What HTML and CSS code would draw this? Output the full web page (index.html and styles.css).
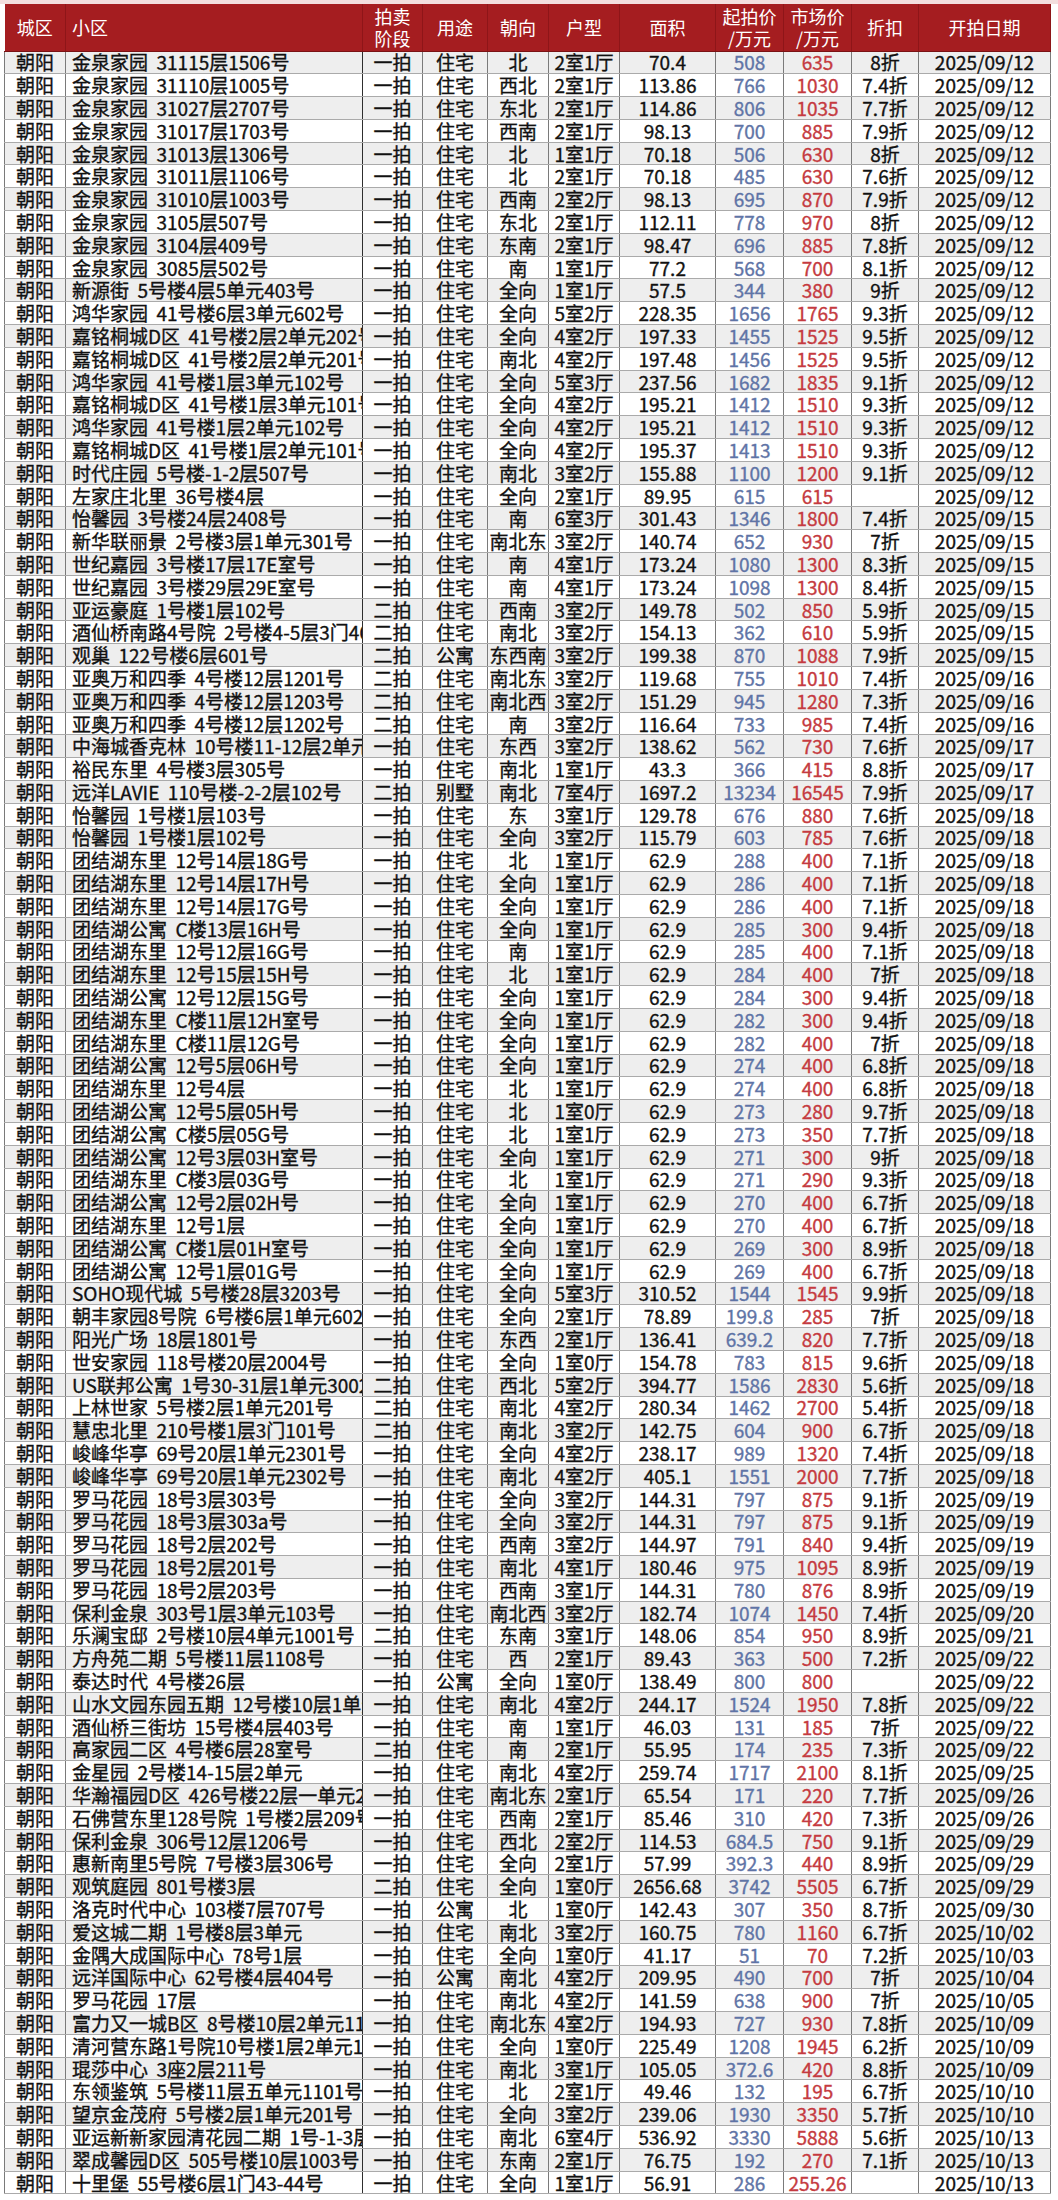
FILE: index.html
```html
<!DOCTYPE html>
<html lang="zh-CN">
<head>
<meta charset="utf-8">
<title>朝阳法拍房</title>
<link rel="stylesheet" href="styles.css">
</head>
<body>
<div class="topbar"></div>
<table class="sheet">
<colgroup>
<col class="c-district"><col class="c-name"><col class="c-stage"><col class="c-use"><col class="c-dir"><col class="c-type"><col class="c-area"><col class="c-start"><col class="c-market"><col class="c-disc"><col class="c-date">
</colgroup>
<thead>
<tr>
<th>城区</th><th class="h-name">小区</th><th>拍卖<br>阶段</th><th>用途</th><th>朝向</th><th>户型</th><th>面积</th><th>起拍价<br>/万元</th><th>市场价<br>/万元</th><th>折扣</th><th>开拍日期</th>
</tr>
</thead>
<tbody>
<tr><td>朝阳</td><td>金泉家园&nbsp;&nbsp;31115层1506号</td><td>一拍</td><td>住宅</td><td>北</td><td>2室1厅</td><td>70.4</td><td>508</td><td>635</td><td>8折</td><td>2025/09/12</td></tr>
<tr><td>朝阳</td><td>金泉家园&nbsp;&nbsp;31110层1005号</td><td>一拍</td><td>住宅</td><td>西北</td><td>2室1厅</td><td>113.86</td><td>766</td><td>1030</td><td>7.4折</td><td>2025/09/12</td></tr>
<tr><td>朝阳</td><td>金泉家园&nbsp;&nbsp;31027层2707号</td><td>一拍</td><td>住宅</td><td>东北</td><td>2室1厅</td><td>114.86</td><td>806</td><td>1035</td><td>7.7折</td><td>2025/09/12</td></tr>
<tr><td>朝阳</td><td>金泉家园&nbsp;&nbsp;31017层1703号</td><td>一拍</td><td>住宅</td><td>西南</td><td>2室1厅</td><td>98.13</td><td>700</td><td>885</td><td>7.9折</td><td>2025/09/12</td></tr>
<tr><td>朝阳</td><td>金泉家园&nbsp;&nbsp;31013层1306号</td><td>一拍</td><td>住宅</td><td>北</td><td>1室1厅</td><td>70.18</td><td>506</td><td>630</td><td>8折</td><td>2025/09/12</td></tr>
<tr><td>朝阳</td><td>金泉家园&nbsp;&nbsp;31011层1106号</td><td>一拍</td><td>住宅</td><td>北</td><td>2室1厅</td><td>70.18</td><td>485</td><td>630</td><td>7.6折</td><td>2025/09/12</td></tr>
<tr><td>朝阳</td><td>金泉家园&nbsp;&nbsp;31010层1003号</td><td>一拍</td><td>住宅</td><td>西南</td><td>2室2厅</td><td>98.13</td><td>695</td><td>870</td><td>7.9折</td><td>2025/09/12</td></tr>
<tr><td>朝阳</td><td>金泉家园&nbsp;&nbsp;3105层507号</td><td>一拍</td><td>住宅</td><td>东北</td><td>2室1厅</td><td>112.11</td><td>778</td><td>970</td><td>8折</td><td>2025/09/12</td></tr>
<tr><td>朝阳</td><td>金泉家园&nbsp;&nbsp;3104层409号</td><td>一拍</td><td>住宅</td><td>东南</td><td>2室1厅</td><td>98.47</td><td>696</td><td>885</td><td>7.8折</td><td>2025/09/12</td></tr>
<tr><td>朝阳</td><td>金泉家园&nbsp;&nbsp;3085层502号</td><td>一拍</td><td>住宅</td><td>南</td><td>1室1厅</td><td>77.2</td><td>568</td><td>700</td><td>8.1折</td><td>2025/09/12</td></tr>
<tr><td>朝阳</td><td>新源街&nbsp;&nbsp;5号楼4层5单元403号</td><td>一拍</td><td>住宅</td><td>全向</td><td>1室1厅</td><td>57.5</td><td>344</td><td>380</td><td>9折</td><td>2025/09/12</td></tr>
<tr><td>朝阳</td><td>鸿华家园&nbsp;&nbsp;41号楼6层3单元602号</td><td>一拍</td><td>住宅</td><td>全向</td><td>5室2厅</td><td>228.35</td><td>1656</td><td>1765</td><td>9.3折</td><td>2025/09/12</td></tr>
<tr><td>朝阳</td><td>嘉铭桐城D区&nbsp;&nbsp;41号楼2层2单元202号</td><td>一拍</td><td>住宅</td><td>全向</td><td>4室2厅</td><td>197.33</td><td>1455</td><td>1525</td><td>9.5折</td><td>2025/09/12</td></tr>
<tr><td>朝阳</td><td>嘉铭桐城D区&nbsp;&nbsp;41号楼2层2单元201号</td><td>一拍</td><td>住宅</td><td>南北</td><td>4室2厅</td><td>197.48</td><td>1456</td><td>1525</td><td>9.5折</td><td>2025/09/12</td></tr>
<tr><td>朝阳</td><td>鸿华家园&nbsp;&nbsp;41号楼1层3单元102号</td><td>一拍</td><td>住宅</td><td>全向</td><td>5室3厅</td><td>237.56</td><td>1682</td><td>1835</td><td>9.1折</td><td>2025/09/12</td></tr>
<tr><td>朝阳</td><td>嘉铭桐城D区&nbsp;&nbsp;41号楼1层3单元101号</td><td>一拍</td><td>住宅</td><td>全向</td><td>4室2厅</td><td>195.21</td><td>1412</td><td>1510</td><td>9.3折</td><td>2025/09/12</td></tr>
<tr><td>朝阳</td><td>鸿华家园&nbsp;&nbsp;41号楼1层2单元102号</td><td>一拍</td><td>住宅</td><td>全向</td><td>4室2厅</td><td>195.21</td><td>1412</td><td>1510</td><td>9.3折</td><td>2025/09/12</td></tr>
<tr><td>朝阳</td><td>嘉铭桐城D区&nbsp;&nbsp;41号楼1层2单元101号</td><td>一拍</td><td>住宅</td><td>全向</td><td>4室2厅</td><td>195.37</td><td>1413</td><td>1510</td><td>9.3折</td><td>2025/09/12</td></tr>
<tr><td>朝阳</td><td>时代庄园&nbsp;&nbsp;5号楼-1-2层507号</td><td>一拍</td><td>住宅</td><td>南北</td><td>3室2厅</td><td>155.88</td><td>1100</td><td>1200</td><td>9.1折</td><td>2025/09/12</td></tr>
<tr><td>朝阳</td><td>左家庄北里&nbsp;&nbsp;36号楼4层</td><td>一拍</td><td>住宅</td><td>全向</td><td>2室1厅</td><td>89.95</td><td>615</td><td>615</td><td></td><td>2025/09/12</td></tr>
<tr><td>朝阳</td><td>怡馨园&nbsp;&nbsp;3号楼24层2408号</td><td>一拍</td><td>住宅</td><td>南</td><td>6室3厅</td><td>301.43</td><td>1346</td><td>1800</td><td>7.4折</td><td>2025/09/15</td></tr>
<tr><td>朝阳</td><td>新华联丽景&nbsp;&nbsp;2号楼3层1单元301号</td><td>一拍</td><td>住宅</td><td>南北东</td><td>3室2厅</td><td>140.74</td><td>652</td><td>930</td><td>7折</td><td>2025/09/15</td></tr>
<tr><td>朝阳</td><td>世纪嘉园&nbsp;&nbsp;3号楼17层17E室号</td><td>一拍</td><td>住宅</td><td>南</td><td>4室1厅</td><td>173.24</td><td>1080</td><td>1300</td><td>8.3折</td><td>2025/09/15</td></tr>
<tr><td>朝阳</td><td>世纪嘉园&nbsp;&nbsp;3号楼29层29E室号</td><td>一拍</td><td>住宅</td><td>南</td><td>4室1厅</td><td>173.24</td><td>1098</td><td>1300</td><td>8.4折</td><td>2025/09/15</td></tr>
<tr><td>朝阳</td><td>亚运豪庭&nbsp;&nbsp;1号楼1层102号</td><td>二拍</td><td>住宅</td><td>西南</td><td>3室2厅</td><td>149.78</td><td>502</td><td>850</td><td>5.9折</td><td>2025/09/15</td></tr>
<tr><td>朝阳</td><td>酒仙桥南路4号院&nbsp;&nbsp;2号楼4-5层3门401号</td><td>二拍</td><td>住宅</td><td>南北</td><td>3室2厅</td><td>154.13</td><td>362</td><td>610</td><td>5.9折</td><td>2025/09/15</td></tr>
<tr><td>朝阳</td><td>观巢&nbsp;&nbsp;122号楼6层601号</td><td>二拍</td><td>公寓</td><td>东西南</td><td>3室2厅</td><td>199.38</td><td>870</td><td>1088</td><td>7.9折</td><td>2025/09/15</td></tr>
<tr><td>朝阳</td><td>亚奥万和四季&nbsp;&nbsp;4号楼12层1201号</td><td>二拍</td><td>住宅</td><td>南北东</td><td>3室2厅</td><td>119.68</td><td>755</td><td>1010</td><td>7.4折</td><td>2025/09/16</td></tr>
<tr><td>朝阳</td><td>亚奥万和四季&nbsp;&nbsp;4号楼12层1203号</td><td>二拍</td><td>住宅</td><td>南北西</td><td>3室2厅</td><td>151.29</td><td>945</td><td>1280</td><td>7.3折</td><td>2025/09/16</td></tr>
<tr><td>朝阳</td><td>亚奥万和四季&nbsp;&nbsp;4号楼12层1202号</td><td>二拍</td><td>住宅</td><td>南</td><td>3室2厅</td><td>116.64</td><td>733</td><td>985</td><td>7.4折</td><td>2025/09/16</td></tr>
<tr><td>朝阳</td><td>中海城香克林&nbsp;&nbsp;10号楼11-12层2单元</td><td>一拍</td><td>住宅</td><td>东西</td><td>3室2厅</td><td>138.62</td><td>562</td><td>730</td><td>7.6折</td><td>2025/09/17</td></tr>
<tr><td>朝阳</td><td>裕民东里&nbsp;&nbsp;4号楼3层305号</td><td>一拍</td><td>住宅</td><td>南北</td><td>1室1厅</td><td>43.3</td><td>366</td><td>415</td><td>8.8折</td><td>2025/09/17</td></tr>
<tr><td>朝阳</td><td>远洋LAVIE&nbsp;&nbsp;110号楼-2-2层102号</td><td>二拍</td><td>别墅</td><td>南北</td><td>7室4厅</td><td>1697.2</td><td>13234</td><td>16545</td><td>7.9折</td><td>2025/09/17</td></tr>
<tr><td>朝阳</td><td>怡馨园&nbsp;&nbsp;1号楼1层103号</td><td>一拍</td><td>住宅</td><td>东</td><td>3室1厅</td><td>129.78</td><td>676</td><td>880</td><td>7.6折</td><td>2025/09/18</td></tr>
<tr><td>朝阳</td><td>怡馨园&nbsp;&nbsp;1号楼1层102号</td><td>一拍</td><td>住宅</td><td>全向</td><td>3室2厅</td><td>115.79</td><td>603</td><td>785</td><td>7.6折</td><td>2025/09/18</td></tr>
<tr><td>朝阳</td><td>团结湖东里&nbsp;&nbsp;12号14层18G号</td><td>一拍</td><td>住宅</td><td>北</td><td>1室1厅</td><td>62.9</td><td>288</td><td>400</td><td>7.1折</td><td>2025/09/18</td></tr>
<tr><td>朝阳</td><td>团结湖东里&nbsp;&nbsp;12号14层17H号</td><td>一拍</td><td>住宅</td><td>全向</td><td>1室1厅</td><td>62.9</td><td>286</td><td>400</td><td>7.1折</td><td>2025/09/18</td></tr>
<tr><td>朝阳</td><td>团结湖东里&nbsp;&nbsp;12号14层17G号</td><td>一拍</td><td>住宅</td><td>全向</td><td>1室1厅</td><td>62.9</td><td>286</td><td>400</td><td>7.1折</td><td>2025/09/18</td></tr>
<tr><td>朝阳</td><td>团结湖公寓&nbsp;&nbsp;C楼13层16H号</td><td>一拍</td><td>住宅</td><td>全向</td><td>1室1厅</td><td>62.9</td><td>285</td><td>300</td><td>9.4折</td><td>2025/09/18</td></tr>
<tr><td>朝阳</td><td>团结湖东里&nbsp;&nbsp;12号12层16G号</td><td>一拍</td><td>住宅</td><td>南</td><td>1室1厅</td><td>62.9</td><td>285</td><td>400</td><td>7.1折</td><td>2025/09/18</td></tr>
<tr><td>朝阳</td><td>团结湖东里&nbsp;&nbsp;12号15层15H号</td><td>一拍</td><td>住宅</td><td>北</td><td>1室1厅</td><td>62.9</td><td>284</td><td>400</td><td>7折</td><td>2025/09/18</td></tr>
<tr><td>朝阳</td><td>团结湖公寓&nbsp;&nbsp;12号12层15G号</td><td>一拍</td><td>住宅</td><td>全向</td><td>1室1厅</td><td>62.9</td><td>284</td><td>300</td><td>9.4折</td><td>2025/09/18</td></tr>
<tr><td>朝阳</td><td>团结湖东里&nbsp;&nbsp;C楼11层12H室号</td><td>一拍</td><td>住宅</td><td>全向</td><td>1室1厅</td><td>62.9</td><td>282</td><td>300</td><td>9.4折</td><td>2025/09/18</td></tr>
<tr><td>朝阳</td><td>团结湖东里&nbsp;&nbsp;C楼11层12G号</td><td>一拍</td><td>住宅</td><td>全向</td><td>1室1厅</td><td>62.9</td><td>282</td><td>400</td><td>7折</td><td>2025/09/18</td></tr>
<tr><td>朝阳</td><td>团结湖公寓&nbsp;&nbsp;12号5层06H号</td><td>一拍</td><td>住宅</td><td>全向</td><td>1室1厅</td><td>62.9</td><td>274</td><td>400</td><td>6.8折</td><td>2025/09/18</td></tr>
<tr><td>朝阳</td><td>团结湖东里&nbsp;&nbsp;12号4层</td><td>一拍</td><td>住宅</td><td>北</td><td>1室1厅</td><td>62.9</td><td>274</td><td>400</td><td>6.8折</td><td>2025/09/18</td></tr>
<tr><td>朝阳</td><td>团结湖公寓&nbsp;&nbsp;12号5层05H号</td><td>一拍</td><td>住宅</td><td>北</td><td>1室0厅</td><td>62.9</td><td>273</td><td>280</td><td>9.7折</td><td>2025/09/18</td></tr>
<tr><td>朝阳</td><td>团结湖公寓&nbsp;&nbsp;C楼5层05G号</td><td>一拍</td><td>住宅</td><td>北</td><td>1室1厅</td><td>62.9</td><td>273</td><td>350</td><td>7.7折</td><td>2025/09/18</td></tr>
<tr><td>朝阳</td><td>团结湖公寓&nbsp;&nbsp;12号3层03H室号</td><td>一拍</td><td>住宅</td><td>全向</td><td>1室1厅</td><td>62.9</td><td>271</td><td>300</td><td>9折</td><td>2025/09/18</td></tr>
<tr><td>朝阳</td><td>团结湖东里&nbsp;&nbsp;C楼3层03G号</td><td>一拍</td><td>住宅</td><td>北</td><td>1室1厅</td><td>62.9</td><td>271</td><td>290</td><td>9.3折</td><td>2025/09/18</td></tr>
<tr><td>朝阳</td><td>团结湖公寓&nbsp;&nbsp;12号2层02H号</td><td>一拍</td><td>住宅</td><td>全向</td><td>1室1厅</td><td>62.9</td><td>270</td><td>400</td><td>6.7折</td><td>2025/09/18</td></tr>
<tr><td>朝阳</td><td>团结湖东里&nbsp;&nbsp;12号1层</td><td>一拍</td><td>住宅</td><td>全向</td><td>1室1厅</td><td>62.9</td><td>270</td><td>400</td><td>6.7折</td><td>2025/09/18</td></tr>
<tr><td>朝阳</td><td>团结湖公寓&nbsp;&nbsp;C楼1层01H室号</td><td>一拍</td><td>住宅</td><td>全向</td><td>1室1厅</td><td>62.9</td><td>269</td><td>300</td><td>8.9折</td><td>2025/09/18</td></tr>
<tr><td>朝阳</td><td>团结湖公寓&nbsp;&nbsp;12号1层01G号</td><td>一拍</td><td>住宅</td><td>全向</td><td>1室1厅</td><td>62.9</td><td>269</td><td>400</td><td>6.7折</td><td>2025/09/18</td></tr>
<tr><td>朝阳</td><td>SOHO现代城&nbsp;&nbsp;5号楼28层3203号</td><td>一拍</td><td>住宅</td><td>全向</td><td>5室3厅</td><td>310.52</td><td>1544</td><td>1545</td><td>9.9折</td><td>2025/09/18</td></tr>
<tr><td>朝阳</td><td>朝丰家园8号院&nbsp;&nbsp;6号楼6层1单元602号</td><td>一拍</td><td>住宅</td><td>全向</td><td>2室1厅</td><td>78.89</td><td>199.8</td><td>285</td><td>7折</td><td>2025/09/18</td></tr>
<tr><td>朝阳</td><td>阳光广场&nbsp;&nbsp;18层1801号</td><td>一拍</td><td>住宅</td><td>东西</td><td>2室1厅</td><td>136.41</td><td>639.2</td><td>820</td><td>7.7折</td><td>2025/09/18</td></tr>
<tr><td>朝阳</td><td>世安家园&nbsp;&nbsp;118号楼20层2004号</td><td>一拍</td><td>住宅</td><td>全向</td><td>1室0厅</td><td>154.78</td><td>783</td><td>815</td><td>9.6折</td><td>2025/09/18</td></tr>
<tr><td>朝阳</td><td>US联邦公寓&nbsp;&nbsp;1号30-31层1单元3002号</td><td>二拍</td><td>住宅</td><td>西北</td><td>5室2厅</td><td>394.77</td><td>1586</td><td>2830</td><td>5.6折</td><td>2025/09/18</td></tr>
<tr><td>朝阳</td><td>上林世家&nbsp;&nbsp;5号楼2层1单元201号</td><td>二拍</td><td>住宅</td><td>南北</td><td>4室2厅</td><td>280.34</td><td>1462</td><td>2700</td><td>5.4折</td><td>2025/09/18</td></tr>
<tr><td>朝阳</td><td>慧忠北里&nbsp;&nbsp;210号楼1层3门101号</td><td>二拍</td><td>住宅</td><td>南北</td><td>3室2厅</td><td>142.75</td><td>604</td><td>900</td><td>6.7折</td><td>2025/09/18</td></tr>
<tr><td>朝阳</td><td>峻峰华亭&nbsp;&nbsp;69号20层1单元2301号</td><td>一拍</td><td>住宅</td><td>全向</td><td>4室2厅</td><td>238.17</td><td>989</td><td>1320</td><td>7.4折</td><td>2025/09/18</td></tr>
<tr><td>朝阳</td><td>峻峰华亭&nbsp;&nbsp;69号20层1单元2302号</td><td>一拍</td><td>住宅</td><td>南北</td><td>4室2厅</td><td>405.1</td><td>1551</td><td>2000</td><td>7.7折</td><td>2025/09/18</td></tr>
<tr><td>朝阳</td><td>罗马花园&nbsp;&nbsp;18号3层303号</td><td>一拍</td><td>住宅</td><td>全向</td><td>3室2厅</td><td>144.31</td><td>797</td><td>875</td><td>9.1折</td><td>2025/09/19</td></tr>
<tr><td>朝阳</td><td>罗马花园&nbsp;&nbsp;18号3层303a号</td><td>一拍</td><td>住宅</td><td>全向</td><td>3室2厅</td><td>144.31</td><td>797</td><td>875</td><td>9.1折</td><td>2025/09/19</td></tr>
<tr><td>朝阳</td><td>罗马花园&nbsp;&nbsp;18号2层202号</td><td>一拍</td><td>住宅</td><td>西南</td><td>3室2厅</td><td>144.97</td><td>791</td><td>840</td><td>9.4折</td><td>2025/09/19</td></tr>
<tr><td>朝阳</td><td>罗马花园&nbsp;&nbsp;18号2层201号</td><td>一拍</td><td>住宅</td><td>南北</td><td>4室1厅</td><td>180.46</td><td>975</td><td>1095</td><td>8.9折</td><td>2025/09/19</td></tr>
<tr><td>朝阳</td><td>罗马花园&nbsp;&nbsp;18号2层203号</td><td>一拍</td><td>住宅</td><td>西南</td><td>3室1厅</td><td>144.31</td><td>780</td><td>876</td><td>8.9折</td><td>2025/09/19</td></tr>
<tr><td>朝阳</td><td>保利金泉&nbsp;&nbsp;303号1层3单元103号</td><td>一拍</td><td>住宅</td><td>南北西</td><td>3室2厅</td><td>182.74</td><td>1074</td><td>1450</td><td>7.4折</td><td>2025/09/20</td></tr>
<tr><td>朝阳</td><td>乐澜宝邸&nbsp;&nbsp;2号楼10层4单元1001号</td><td>二拍</td><td>住宅</td><td>东南</td><td>3室1厅</td><td>148.06</td><td>854</td><td>950</td><td>8.9折</td><td>2025/09/21</td></tr>
<tr><td>朝阳</td><td>方舟苑二期&nbsp;&nbsp;5号楼11层1108号</td><td>一拍</td><td>住宅</td><td>西</td><td>2室1厅</td><td>89.43</td><td>363</td><td>500</td><td>7.2折</td><td>2025/09/22</td></tr>
<tr><td>朝阳</td><td>泰达时代&nbsp;&nbsp;4号楼26层</td><td>一拍</td><td>公寓</td><td>全向</td><td>1室0厅</td><td>138.49</td><td>800</td><td>800</td><td></td><td>2025/09/22</td></tr>
<tr><td>朝阳</td><td>山水文园东园五期&nbsp;&nbsp;12号楼10层1单元</td><td>一拍</td><td>住宅</td><td>南北</td><td>4室2厅</td><td>244.17</td><td>1524</td><td>1950</td><td>7.8折</td><td>2025/09/22</td></tr>
<tr><td>朝阳</td><td>酒仙桥三街坊&nbsp;&nbsp;15号楼4层403号</td><td>一拍</td><td>住宅</td><td>南</td><td>1室1厅</td><td>46.03</td><td>131</td><td>185</td><td>7折</td><td>2025/09/22</td></tr>
<tr><td>朝阳</td><td>高家园二区&nbsp;&nbsp;4号楼6层28室号</td><td>二拍</td><td>住宅</td><td>南</td><td>2室1厅</td><td>55.95</td><td>174</td><td>235</td><td>7.3折</td><td>2025/09/22</td></tr>
<tr><td>朝阳</td><td>金星园&nbsp;&nbsp;2号楼14-15层2单元</td><td>一拍</td><td>住宅</td><td>南北</td><td>4室2厅</td><td>259.74</td><td>1717</td><td>2100</td><td>8.1折</td><td>2025/09/25</td></tr>
<tr><td>朝阳</td><td>华瀚福园D区&nbsp;&nbsp;426号楼22层一单元2202号</td><td>一拍</td><td>住宅</td><td>南北东</td><td>2室1厅</td><td>65.54</td><td>171</td><td>220</td><td>7.7折</td><td>2025/09/26</td></tr>
<tr><td>朝阳</td><td>石佛营东里128号院&nbsp;&nbsp;1号楼2层209号</td><td>一拍</td><td>住宅</td><td>西南</td><td>2室1厅</td><td>85.46</td><td>310</td><td>420</td><td>7.3折</td><td>2025/09/26</td></tr>
<tr><td>朝阳</td><td>保利金泉&nbsp;&nbsp;306号12层1206号</td><td>一拍</td><td>住宅</td><td>西北</td><td>2室2厅</td><td>114.53</td><td>684.5</td><td>750</td><td>9.1折</td><td>2025/09/29</td></tr>
<tr><td>朝阳</td><td>惠新南里5号院&nbsp;&nbsp;7号楼3层306号</td><td>一拍</td><td>住宅</td><td>全向</td><td>2室1厅</td><td>57.99</td><td>392.3</td><td>440</td><td>8.9折</td><td>2025/09/29</td></tr>
<tr><td>朝阳</td><td>观筑庭园&nbsp;&nbsp;801号楼3层</td><td>二拍</td><td>住宅</td><td>全向</td><td>1室0厅</td><td>2656.68</td><td>3742</td><td>5505</td><td>6.7折</td><td>2025/09/29</td></tr>
<tr><td>朝阳</td><td>洛克时代中心&nbsp;&nbsp;103楼7层707号</td><td>一拍</td><td>公寓</td><td>北</td><td>1室0厅</td><td>142.43</td><td>307</td><td>350</td><td>8.7折</td><td>2025/09/30</td></tr>
<tr><td>朝阳</td><td>爱这城二期&nbsp;&nbsp;1号楼8层3单元</td><td>一拍</td><td>住宅</td><td>南北</td><td>3室2厅</td><td>160.75</td><td>780</td><td>1160</td><td>6.7折</td><td>2025/10/02</td></tr>
<tr><td>朝阳</td><td>金隅大成国际中心&nbsp;&nbsp;78号1层</td><td>一拍</td><td>住宅</td><td>全向</td><td>1室0厅</td><td>41.17</td><td>51</td><td>70</td><td>7.2折</td><td>2025/10/03</td></tr>
<tr><td>朝阳</td><td>远洋国际中心&nbsp;&nbsp;62号楼4层404号</td><td>一拍</td><td>公寓</td><td>南北</td><td>4室2厅</td><td>209.95</td><td>490</td><td>700</td><td>7折</td><td>2025/10/04</td></tr>
<tr><td>朝阳</td><td>罗马花园&nbsp;&nbsp;17层</td><td>一拍</td><td>住宅</td><td>南北</td><td>4室2厅</td><td>141.59</td><td>638</td><td>900</td><td>7折</td><td>2025/10/05</td></tr>
<tr><td>朝阳</td><td>富力又一城B区&nbsp;&nbsp;8号楼10层2单元1101号</td><td>一拍</td><td>住宅</td><td>南北东</td><td>4室2厅</td><td>194.93</td><td>727</td><td>930</td><td>7.8折</td><td>2025/10/09</td></tr>
<tr><td>朝阳</td><td>清河营东路1号院10号楼1层2单元101号</td><td>一拍</td><td>住宅</td><td>全向</td><td>1室0厅</td><td>225.49</td><td>1208</td><td>1945</td><td>6.2折</td><td>2025/10/09</td></tr>
<tr><td>朝阳</td><td>琨莎中心&nbsp;&nbsp;3座2层211号</td><td>一拍</td><td>住宅</td><td>南北</td><td>3室1厅</td><td>105.05</td><td>372.6</td><td>420</td><td>8.8折</td><td>2025/10/09</td></tr>
<tr><td>朝阳</td><td>东领鉴筑&nbsp;&nbsp;5号楼11层五单元1101号</td><td>一拍</td><td>住宅</td><td>北</td><td>2室1厅</td><td>49.46</td><td>132</td><td>195</td><td>6.7折</td><td>2025/10/10</td></tr>
<tr><td>朝阳</td><td>望京金茂府&nbsp;&nbsp;5号楼2层1单元201号</td><td>一拍</td><td>住宅</td><td>全向</td><td>3室2厅</td><td>239.06</td><td>1930</td><td>3350</td><td>5.7折</td><td>2025/10/10</td></tr>
<tr><td>朝阳</td><td>亚运新新家园清花园二期&nbsp;&nbsp;1号-1-3层</td><td>一拍</td><td>住宅</td><td>南北</td><td>6室4厅</td><td>536.92</td><td>3330</td><td>5888</td><td>5.6折</td><td>2025/10/13</td></tr>
<tr><td>朝阳</td><td>翠成馨园D区&nbsp;&nbsp;505号楼10层1003号</td><td>一拍</td><td>住宅</td><td>东南</td><td>2室1厅</td><td>76.75</td><td>192</td><td>270</td><td>7.1折</td><td>2025/10/13</td></tr>
<tr><td>朝阳</td><td>十里堡&nbsp;&nbsp;55号楼6层1门43-44号</td><td>一拍</td><td>住宅</td><td>全向</td><td>1室1厅</td><td>56.91</td><td>286</td><td>255.26</td><td></td><td>2025/10/13</td></tr>
</tbody>
</table>
</body>
</html>
```

FILE: styles.css
```css
html, body {
  margin: 0;
  padding: 0;
  background: #ffffff;
}

body {
  font-family: "Noto Sans CJK SC", "Noto Sans", sans-serif;
  color: #111111;
}

.topbar {
  height: 4px;
  background: #f3dede;
}

.sheet {
  margin-left: 4px;
  width: 1046px;
  table-layout: fixed;
  border-collapse: collapse;
  font-size: 19px;
}

.c-district { width: 61px; }
.c-name { width: 297px; }
.c-stage { width: 60px; }
.c-use { width: 65px; }
.c-dir { width: 61px; }
.c-type { width: 71px; }
.c-area { width: 96px; }
.c-start { width: 68px; }
.c-market { width: 68px; }
.c-disc { width: 67px; }
.c-date { width: 132px; }

.sheet thead tr {
  height: 47px;
  background: #a51d20;
}

.sheet th {
  color: #ffffff;
  font-weight: normal;
  font-size: 18px;
  line-height: 22px;
  padding: 0;
  text-align: center;
  border-right: 1px solid #8e1518;
  border-bottom: 1px solid #7a1214;
}

.sheet th.h-name {
  text-align: left;
  padding-left: 6px;
}

.sheet tbody tr {
  height: 22.8px;
}

.sheet tbody tr:nth-child(odd) {
  background: #eeeeee;
}

.sheet td {
  padding: 0;
  line-height: 20px;
  text-align: center;
  white-space: nowrap;
  -webkit-text-stroke: 0.35px currentColor;
  border-left: 1px solid #7a7a7a;
  border-right: 1px solid #7a7a7a;
  border-bottom: 1px solid #aaaaaa;
}

.sheet td:nth-child(2) {
  text-align: left;
  padding-left: 6px;
  overflow-x: clip;
  overflow-y: visible;
  border-right-color: #2e2e2e;
}

.sheet td:nth-child(8) {
  color: #5f74a6;
}

.sheet td:nth-child(9) {
  color: #c53a40;
}
```
